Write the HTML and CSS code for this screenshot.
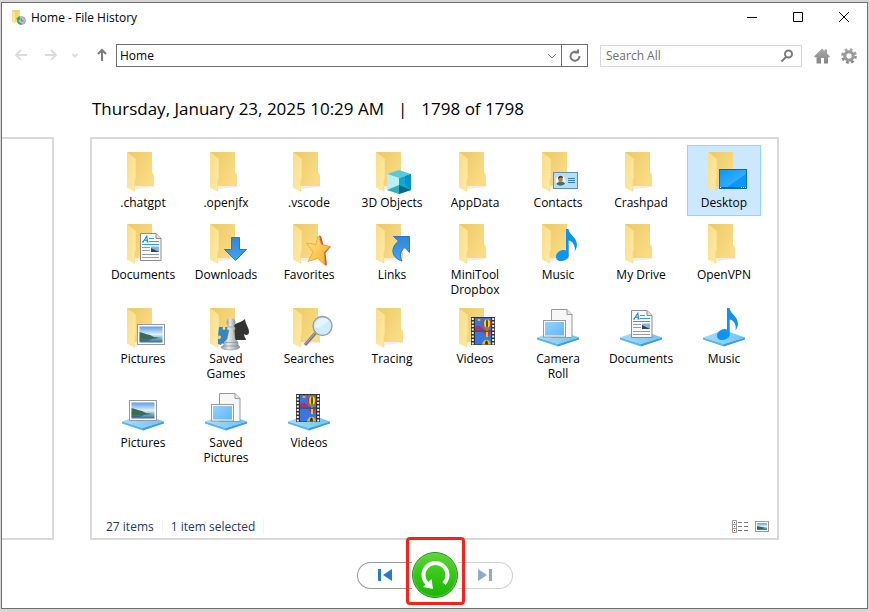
FILE: index.html
```html
<!DOCTYPE html>
<html lang="en">
<head>
<meta charset="utf-8">
<title>Home - File History</title>
<link rel="stylesheet" href="styles.css">
</head>
<body>
<svg class="sprite" aria-hidden="true">
  <defs>
    <linearGradient id="gBack" x1="0" y1="0" x2="1" y2="0.6"><stop offset="0" stop-color="#ecc865"/><stop offset="1" stop-color="#fadc84"/></linearGradient>
    <linearGradient id="gFront" x1="0" y1="0" x2="1" y2="1"><stop offset="0" stop-color="#f9dc85"/><stop offset="1" stop-color="#ffeba9"/></linearGradient>
    <linearGradient id="gBlue" x1="0" y1="0" x2="0" y2="1"><stop offset="0" stop-color="#2f86d6"/><stop offset="1" stop-color="#43a4f2"/></linearGradient>
    <linearGradient id="gBase" x1="0" y1="0" x2="1" y2="0"><stop offset="0" stop-color="#a5dcfb"/><stop offset="1" stop-color="#6fc3f5"/></linearGradient>
    <linearGradient id="gStar" x1="0" y1="0" x2="1" y2="1"><stop offset="0" stop-color="#ffe68a"/><stop offset="1" stop-color="#f7a928"/></linearGradient>
    <linearGradient id="gScreen" x1="0" y1="0" x2="1" y2="1"><stop offset="0" stop-color="#0d93f6"/><stop offset="0.6" stop-color="#30adff"/><stop offset="0.61" stop-color="#0a96fb"/><stop offset="1" stop-color="#0c9bff"/></linearGradient>
    <linearGradient id="gPhoto" x1="0" y1="0" x2="0" y2="1"><stop offset="0" stop-color="#5e9bea"/><stop offset="0.5" stop-color="#dff1fb"/><stop offset="0.8" stop-color="#6aa0bd"/><stop offset="1" stop-color="#2f6d9c"/></linearGradient>
    <linearGradient id="gFrame" x1="0" y1="0" x2="1" y2="1"><stop offset="0" stop-color="#94d2ff"/><stop offset="1" stop-color="#60b6fb"/></linearGradient>
    <linearGradient id="gPawn" x1="0" y1="0" x2="1" y2="0"><stop offset="0" stop-color="#8e969a"/><stop offset="0.4" stop-color="#e3e8ea"/><stop offset="1" stop-color="#868e92"/></linearGradient>
    <linearGradient id="gGray" x1="0" y1="0" x2="0" y2="1"><stop offset="0" stop-color="#aaaaaa"/><stop offset="1" stop-color="#858585"/></linearGradient>
    <linearGradient id="gGreen" x1="0" y1="0" x2="0" y2="1"><stop offset="0" stop-color="#5fd639"/><stop offset="0.5" stop-color="#35c617"/><stop offset="1" stop-color="#1cb409"/></linearGradient>
  </defs>
  <symbol id="folder" viewBox="0 0 48 48">
    <path d="M33 39H17V42L38 39.500Z" fill="#9a9a9a" opacity=".18"/>
    <path d="M8 5H33V25L35 28V39H16Z" fill="url(#gBack)"/>
    <path d="M8 5L17 12V31L16 33V45L8 40.500Z" fill="url(#gFront)"/>
    <path d="M17 12V31L16 33V44" fill="none" stroke="#f2d27a" stroke-width=".7"/>
  </symbol>
  <symbol id="base" viewBox="0 0 48 48">
    <path d="M3 34.500L24 27L45 34.500L24 41Z" fill="url(#gBase)"/>
    <path d="M3 34.500L24 41V43.500L3 36.500Z" fill="#58b5ee"/>
    <path d="M45 34.500L24 41V43.500L45 36.500Z" fill="#3c9cdd"/>
  </symbol>
  <symbol id="doc" viewBox="0 0 48 48">
    <path d="M21.500 14.500H37L42 19.500V41.500H21.500Z" fill="#fafafa" stroke="#8c8c8c"/>
    <path d="M37 14.500V19.500H42" fill="#ddd" stroke="#8c8c8c"/>
    <path d="M24 23L27.800 17.300L28.500 23M25.500 21.200H28.500M23 23H25M27.500 23H29.500" fill="none" stroke="#1587d3" stroke-width="1.100"/>
    <path d="M30 19.500H35M30 22.500H40M23 25.500H40" stroke="#2f9de0"/>
    <path d="M23 28.500H31M23 31.500H31M23 35.500H40M23 38.500H40" stroke="#9b9b9b"/>
    <rect x="32" y="27.500" width="8" height="5.500" fill="#8bb6dc"/><path d="M32 29L37 31.500L40 33H32Z" fill="#22476c"/>
  </symbol>
  <symbol id="note" viewBox="0 0 48 48">
    <path d="M32 10H34.500C35 16 43 18 43 26C43 28 41.500 31 40.500 33C42 26 38 22 34.700 21.500V37C34 40.500 30 42 27 42C23.500 42 22 40 22 37.500C22 34 26 31 29.500 31C30.500 31 31.500 31.200 32 31.500Z" fill="#0b95f1"/>
  </symbol>
  <symbol id="photo" viewBox="0 0 48 48">
    <rect x="18.500" y="21.500" width="27" height="20" fill="#fff" stroke="#999"/>
    <rect x="20.500" y="23.500" width="23" height="16" fill="url(#gPhoto)"/>
    <path d="M20.500 29L24 30L27 31L31 32L35 34L42 35L33 36L20.500 36.500Z" fill="#3c6b52"/>
    <path d="M20.500 36.500L33 36L29 38H20.500Z" fill="#2c5878" opacity=".7"/>
  </symbol>
  <symbol id="film" viewBox="0 0 48 48">
    <rect x="20" y="14" width="24" height="28" fill="#333"/>
    <path d="M21.800 15V42M42.200 15V42" stroke="#f2f2f2" stroke-width="2" stroke-dasharray="2 1.500"/>
    <rect x="24" y="15" width="16" height="12.500" fill="#3d74d8"/><rect x="24" y="28.500" width="16" height="13" fill="#3878de"/>
    <path d="M24 25C27 20 30 25 32 25L33 27.500H24Z" fill="#a9336d"/>
    <ellipse cx="36" cy="20.500" rx="4.500" ry="4.500" fill="#e62c20"/><ellipse cx="36" cy="20.500" rx="3" ry="4.500" fill="#ffd51d"/><ellipse cx="36" cy="20.500" rx="1" ry="4.500" fill="#24632f"/>
    <path d="M33 24.500L35 28H37L39 24.500Z" fill="#bd7613"/>
    <path d="M32 29H40L38 33H35Z" fill="#d82a43"/><path d="M35 29H37V34H35Z" fill="#f6c31b"/>
    <ellipse cx="28" cy="17" rx="1.500" ry="1" fill="#f2bb25"/>
    <path d="M31 41.500C32 35 39 35 40 41.500Z" fill="#efb51a"/><path d="M34 41.500C34 36 37 36 37 41.500Z" fill="#243c28"/>
  </symbol>
  <symbol id="sheets" viewBox="0 0 48 48">
    <path d="M17.500 6.500H33L38 11.500V34.500H17.500Z" fill="#f7f7f7" stroke="#999"/>
    <path d="M33 6.500V11.500H38" fill="#e5e5e5" stroke="#999"/>
    <rect x="9.500" y="17.500" width="22" height="16.500" fill="#fff" stroke="#999"/>
    <rect x="11" y="19" width="19" height="13.500" fill="url(#gFrame)"/>
  </symbol>
</svg>

<div class="window">
  <header class="titlebar">
    <svg class="app-icon" viewBox="0 0 16 16" aria-hidden="true">
      <path d="M1 1H9V10L8 13H3Z" fill="url(#gBack)"/><path d="M1 1L4 3.500V14.500L1 13Z" fill="url(#gFront)"/>
      <circle cx="10.500" cy="11.500" r="4" fill="#b8c0c6" stroke="#9aa2a7" stroke-width=".8"/>
      <path d="M10.500 9.500V12H12.500" stroke="#7b8388" fill="none"/>
      <path d="M10.500 15C7 15 6 12 7.500 9.500" fill="none" stroke="#2cae41" stroke-width="1.600"/><path d="M5 10L8.500 7L9.500 11Z" fill="#2cae41"/>
    </svg>
    <h1 class="title">Home - File History</h1>
    <button class="caption" aria-label="Minimize"><svg viewBox="0 0 12 12"><path d="M1 6.500H11"/></svg></button>
    <button class="caption" aria-label="Maximize"><svg viewBox="0 0 12 12"><path d="M1.500 1.500H10.500V10.500H1.500Z"/></svg></button>
    <button class="caption" aria-label="Close"><svg viewBox="0 0 12 12"><path d="M1 1L11 11M11 1L1 11"/></svg></button>
  </header>

  <nav class="toolbar" aria-label="Navigation">
    <button class="nav" aria-label="Back" disabled><svg viewBox="0 0 14 14"><path d="M13 7H2M7 2L2 7L7 12"/></svg></button>
    <button class="nav" aria-label="Forward" disabled><svg viewBox="0 0 14 14"><path d="M1 7H12M7 2L12 7L7 12"/></svg></button>
    <button class="nav nav-recent" aria-label="Recent locations" disabled><svg viewBox="0 0 14 14"><path d="M4.500 6L7 8.500L9.500 6"/></svg></button>
    <button class="nav nav-up" aria-label="Up"><svg viewBox="0 0 14 14"><path d="M7 13V2M3 6L7 2L11 6"/></svg></button>
    <div class="address">
      <input type="text" value="Home" aria-label="Address">
      <button aria-label="Show locations"><svg viewBox="0 0 14 14"><path d="M3 5L7 9L11 5"/></svg></button>
    </div>
    <button class="refresh" aria-label="Refresh"><svg viewBox="0 0 14 14"><path d="M9.500 3.500A4.500 4.500 0 1 0 11.500 7M6.500 3.500H10V.500"/></svg></button>
    <div class="search">
      <input type="text" placeholder="Search All" aria-label="Search All">
      <button aria-label="Search"><svg viewBox="0 0 14 14"><circle cx="8.500" cy="5" r="3.500"/><path d="M6 8L1.500 12.500"/></svg></button>
    </div>
    <button class="tool" aria-label="Home"><svg viewBox="0 0 16 16"><path d="M8 .500L10.500 3V1.500H13V5.500L16 8.500L15 9.500L14 9V15.500H10V10H7V15.500H2.500V9L1 9.500L0 8.500Z" fill="url(#gGray)"/></svg></button>
    <button class="tool" aria-label="Settings"><svg viewBox="0 0 16 16"><circle cx="8" cy="8" r="6.300" fill="none" stroke="url(#gGray)" stroke-width="3.200" stroke-dasharray="2.600 2.350"/><circle cx="8" cy="8" r="4.200" fill="none" stroke="#999" stroke-width="3"/></svg></button>
  </nav>

  <h2 class="version"><span>Thursday, January 23, 2025 10:29 AM</span><span>|</span><span>1798 of 1798</span></h2>

  <main class="versions">
    <div class="previous" aria-hidden="true"></div>
    <section class="panel" aria-label="Files">
      <div class="files">
        <button class="file"><svg viewBox="0 0 48 48"><use href="#folder"/></svg>.chatgpt</button>
        <button class="file"><svg viewBox="0 0 48 48"><use href="#folder"/></svg>.openjfx</button>
        <button class="file"><svg viewBox="0 0 48 48"><use href="#folder"/></svg>.vscode</button>
        <button class="file"><svg viewBox="0 0 48 48"><use href="#folder"/><path d="M19 27L31 23L43 27L31 31Z" fill="#58c9dc"/><path d="M19 27L31 31V47L19 43Z" fill="#bdeef2"/><path d="M43 27L31 31V47L43 43Z" fill="#0aabd3"/><path d="M37 29L43 27V43L37 37Z" fill="#008fd0"/><path d="M19 43L31 38V47Z" fill="#2fafc0"/><path d="M31 38L43 43L31 47Z" fill="#006d83"/></svg>3D Objects</button>
        <button class="file"><svg viewBox="0 0 48 48"><use href="#folder"/></svg>AppData</button>
        <button class="file"><svg viewBox="0 0 48 48"><use href="#folder"/><rect x="19.500" y="25.500" width="24" height="16" fill="#b9ddf0" stroke="#5d91b1"/><circle cx="26.500" cy="33.500" r="5" fill="#f4f4ef"/><path d="M22.500 37C23 34.500 30 34 31 36.500C29 39 25 39.500 22.500 37Z" fill="#36785b"/><ellipse cx="26.500" cy="32.500" rx="2.200" ry="2.800" fill="#b67c60"/><path d="M24 32C23.500 28 29 28 29 31L26.500 30.500Z" fill="#44372f"/><path d="M34 31.500H41M34 33.500H41M34 35.500H41" stroke="#397eaa"/></svg>Contacts</button>
        <button class="file"><svg viewBox="0 0 48 48"><use href="#folder"/></svg>Crashpad</button>
        <button class="file selected" aria-pressed="true"><svg viewBox="0 0 48 48"><use href="#folder"/><rect x="19.500" y="22.500" width="27" height="19" fill="url(#gScreen)" stroke="#006abb"/><path d="M20 40.500H46" stroke="#0068b9"/><path d="M20 40.500H21M41 40.500H42M43 40.500H44M45 40.500H46" stroke="#fff"/></svg>Desktop</button>

        <button class="file"><svg viewBox="0 0 48 48"><use href="#folder"/><use href="#doc"/></svg>Documents</button>
        <button class="file"><svg viewBox="0 0 48 48"><use href="#folder"/><path d="M29.500 18.500H37.500V30.500H44.500L33.500 41.500L22.500 30.500H29.500Z" fill="url(#gBlue)" stroke="#2379c6"/></svg>Downloads</button>
        <button class="file"><svg viewBox="0 0 48 48"><use href="#folder"/><path d="M34 16.500L36 17L38.500 26L46 27.500L40.500 34L42 46L40 46.500Z" fill="#cd562c"/><path d="M33 17L36.500 25.500L45 27.500L39 33.500L40 46L32.500 39.500L23 42.500L28 33L21.500 24L31 25.500Z" fill="url(#gStar)" stroke="#e69a31" stroke-width=".7"/></svg>Favorites</button>
        <button class="file"><svg viewBox="0 0 48 48"><use href="#folder"/><path d="M25.500 17.500H41.500V33.500L37 28.500C33 31 31 36 34 42C26 40 20 31 30.500 22Z" fill="url(#gBlue)" stroke="#2678c3"/></svg>Links</button>
        <button class="file"><svg viewBox="0 0 48 48"><use href="#folder"/></svg>MiniTool<br>Dropbox</button>
        <button class="file"><svg viewBox="0 0 48 48"><use href="#folder"/><use href="#note"/></svg>Music</button>
        <button class="file"><svg viewBox="0 0 48 48"><use href="#folder"/></svg>My Drive</button>
        <button class="file"><svg viewBox="0 0 48 48"><use href="#folder"/></svg>OpenVPN</button>

        <button class="file"><svg viewBox="0 0 48 48"><use href="#folder"/><use href="#photo"/></svg>Pictures</button>
        <button class="file"><svg viewBox="0 0 48 48"><use href="#folder"/><path d="M17 24H21C19 28 25 28 23 24H27V45L23 43C24 40 19 40 19 42L16 41V36C20 37 20 31 16 33Z" fill="#3586c5"/><path d="M32 22C34 20 40 19 43 16C43 20 47 25 47 29C47 32 44 33 42 31C42 34 44 35 44 37H33Z" fill="#343434"/><circle cx="29" cy="19.500" r="4.500" fill="url(#gPawn)"/><path d="M25 24H33V27H31.500L33 36L36 39V42L38 44C37 48 20 48 19 44L22 42V39L25 36L27 27H25Z" fill="url(#gPawn)" stroke="#7c858a" stroke-width=".5"/><path d="M23 39.500H35M21 43H36" stroke="#7f888e" stroke-width=".6"/></svg>Saved<br>Games</button>
        <button class="file"><svg viewBox="0 0 48 48"><use href="#folder"/><path d="M30.500 30L20 42" stroke="#737b80" stroke-width="3.200"/><path d="M30 30L20 41.500" stroke="#adb4b8"/><circle cx="37.500" cy="23" r="9.500" fill="#c9ebfc" fill-opacity=".92" stroke="#999fa4" stroke-width="1.400"/><path d="M30 24C34 27 40 20 44 18C39 12 30 16 30 24Z" fill="#ecf9ff" opacity=".7"/></svg>Searches</button>
        <button class="file"><svg viewBox="0 0 48 48"><use href="#folder"/></svg>Tracing</button>
        <button class="file"><svg viewBox="0 0 48 48"><use href="#folder"/><use href="#film"/></svg>Videos</button>
        <button class="file"><svg viewBox="0 0 48 48"><use href="#base"/><use href="#sheets"/></svg>Camera<br>Roll</button>
        <button class="file"><svg viewBox="0 0 48 48"><use href="#base"/><use href="#doc" x="-7" y="-7"/></svg>Documents</button>
        <button class="file"><svg viewBox="0 0 48 48"><use href="#base"/><use href="#note" x="-5" y="-5"/></svg>Music</button>

        <button class="file"><svg viewBox="0 0 48 48"><use href="#base"/><use href="#photo" x="-8" y="-8"/></svg>Pictures</button>
        <button class="file"><svg viewBox="0 0 48 48"><use href="#base"/><use href="#sheets"/></svg>Saved<br>Pictures</button>
        <button class="file"><svg viewBox="0 0 48 48"><use href="#base"/><use href="#film" x="-9" y="-7"/></svg>Videos</button>
      </div>
      <footer class="status">
        <span class="count">27 items</span>
        <span class="count">1 item selected</span>
        <button class="view view-details" aria-label="Details view"><svg viewBox="0 0 16 13"><path d="M.500 .500H4.500V12.500H.500ZM.500 4.500H4.500M.500 8.500H4.500" fill="#fff" stroke="#999"/><path d="M6 2.500H10M12 2.500H16M6 6.500H10M12 6.500H16M6 10.500H10M12 10.500H16" stroke="#777"/><path d="M2 2.500H3" stroke="#2c7446"/><path d="M2 6.500H3" stroke="#315fcf"/><path d="M2 10.500H3" stroke="#c22"/></svg></button>
        <button class="view" aria-label="Large icons view"><svg viewBox="0 0 14 13"><rect x=".500" y="1.500" width="13" height="10" fill="#fff" stroke="#999"/><rect x="2" y="3" width="10" height="7" fill="url(#gPhoto)"/><path d="M2 6L11 8L7 9H2Z" fill="#2d6858"/></svg></button>
      </footer>
    </section>
  </main>

  <div class="controls">
    <button class="step previous-version" aria-label="Previous version"><svg viewBox="0 0 14 12"><path d="M0 0H3V12H0ZM14 0V12L5 6Z" fill="#2878cf"/></svg></button>
    <div class="restore-wrap">
      <button class="restore" aria-label="Restore"><svg viewBox="0 0 46 46"><circle cx="23" cy="23" r="22.500" fill="url(#gGreen)" stroke="#218c19"/><circle cx="23" cy="23" r="21.500" fill="none" stroke="#65d749" stroke-width=".7"/><path d="M32 31.500A12 12 0 1 0 15.500 32" fill="none" stroke="#fff" stroke-width="4"/><path d="M11 35L19.500 27L21 37Z" fill="#fff"/></svg></button>
    </div>
    <button class="step next-version" aria-label="Next version" disabled><svg viewBox="0 0 14 12"><path d="M0 0L9 6L0 12ZM11 0H14V12H11Z" fill="#8faac8"/></svg></button>
  </div>
</div>
</body>
</html>
```
FILE: styles.css
```css
* { box-sizing: border-box; }

body {
  margin: 0;
  background: #d6d6d6;
  color: #000;
  font: 12px/15px "Open Sans", "Noto Sans", sans-serif;
}

button,
input {
  margin: 0;
  padding: 0;
  border: 0;
  background: none;
  color: inherit;
  font: inherit;
}

svg { display: block; }

.sprite { position: absolute; width: 0; height: 0; }

.window {
  display: flex;
  flex-direction: column;
  min-height: calc(100vh - 5px);
  margin: 2px 2px 3px 1px;
  border: 1px solid #6e6e6e;
  background: #fff;
}

.titlebar {
  display: flex;
  align-items: center;
  height: 28px;
  padding-left: 9px;
}

.app-icon { width: 16px; height: 16px; }

.title {
  flex: 1;
  margin: 0 0 0 4px;
  font-size: 12px;
  font-weight: 400;
}

.caption {
  display: grid;
  place-items: center;
  width: 46px;
  height: 28px;
}

.caption svg {
  width: 12px;
  height: 12px;
  fill: none;
  stroke: #000;
}

.toolbar {
  display: flex;
  align-items: center;
  margin-top: 13px;
  padding: 0 10px 0 4px;
}

.toolbar svg {
  width: 14px;
  height: 14px;
  fill: none;
  stroke: #7a7a7a;
}

.nav,
.refresh,
.address button,
.search button {
  display: grid;
  flex: none;
  place-items: center;
}

.nav { width: 30px; height: 22px; padding-bottom: 1px; }
.nav svg { stroke-width: 2; }
.nav:disabled svg { stroke: #dcdcdc; }
.nav-recent { width: 18px; }
.nav-up { width: 28px; margin-left: 4px; }

.address {
  display: flex;
  flex: 1;
  height: 23px;
  border: 1px solid #6e6e6e;
}

.address input,
.search input {
  flex: 1;
  min-width: 0;
  padding-bottom: 1px;
  outline: 0;
}

.address input { padding-left: 3px; }
.address button { width: 18px; }

.refresh {
  width: 27px;
  height: 23px;
  margin-left: -1px;
  border: 1px solid #6e6e6e;
}

.refresh svg { stroke-width: 2; }

.search {
  display: flex;
  flex: 0 1 202px;
  height: 22px;
  margin: 0 12px;
  border: 1px solid #d9d9d9;
}

.search input { padding-left: 5px; }
.search input::placeholder { color: #6e6e6e; opacity: 1; }
.search button { width: 28px; }
.search svg { stroke-width: 2; }

.tool svg { width: 16px; height: 16px; stroke: none; }
.tool + .tool { margin-left: 11px; }

.version {
  display: flex;
  gap: 14px;
  margin: 30px 0 16px 90px;
  font-size: 17px;
  font-weight: 400;
  line-height: 24px;
}

.versions {
  display: flex;
  flex: 1;
  gap: 36px;
  padding-right: 88px;
}

.previous {
  flex: none;
  width: 52px;
  border: 2px solid #d9d9d9;
  border-left: 0;
}

.panel {
  display: flex;
  flex: 1;
  flex-direction: column;
  justify-content: space-between;
  border: 2px solid #d9d9d9;
}

.files {
  display: grid;
  grid-template-columns: repeat(auto-fill, 74px);
  gap: 1px 9px;
  padding: 6px 14px;
}

.file {
  display: flex;
  flex-direction: column;
  align-items: center;
  justify-content: flex-start;
  min-height: 71px;
  padding: 1px 0 2px;
  border: 1px solid transparent;
  text-align: center;
  white-space: nowrap;
}

.file svg { width: 48px; height: 48px; }

.selected {
  align-self: start;
  border-color: #99d1ff;
  background: #cce8ff;
}

.status {
  display: flex;
  align-items: center;
  height: 24px;
  padding: 0 8px 0 14px;
  color: #1e395b;
}

.count {
  margin-right: 8px;
  padding-right: 8px;
  border-right: 1px solid #f3f3f3;
}

.view svg { width: 14px; height: 13px; }
.view-details { margin: 0 7px 0 auto; }
.view-details svg { width: 16px; }

.controls {
  display: flex;
  align-items: center;
  justify-content: center;
  height: 68px;
  padding-top: 2px;
}

.step {
  display: flex;
  align-items: center;
  width: 55px;
  height: 27px;
  border: 1px solid #999;
}

.step svg { width: 14px; height: 12px; }

.previous-version {
  padding-left: 20px;
  border-right: 0;
  border-radius: 14px 0 0 14px;
}

.next-version {
  justify-content: flex-end;
  padding-right: 20px;
  border-color: #d0d0d0;
  border-left: 0;
  border-radius: 0 14px 14px 0;
}

.restore-wrap {
  position: relative;
  width: 46px;
  height: 46px;
  border-radius: 50%;
  box-shadow: 0 0 0 3px #fff;
}

.restore-wrap::after {
  content: "";
  position: absolute;
  inset: -15px -7px -7px -6px;
  border: 3px solid #fc2018;
  border-radius: 4px;
  pointer-events: none;
}

.restore svg { width: 46px; height: 46px; }
```
